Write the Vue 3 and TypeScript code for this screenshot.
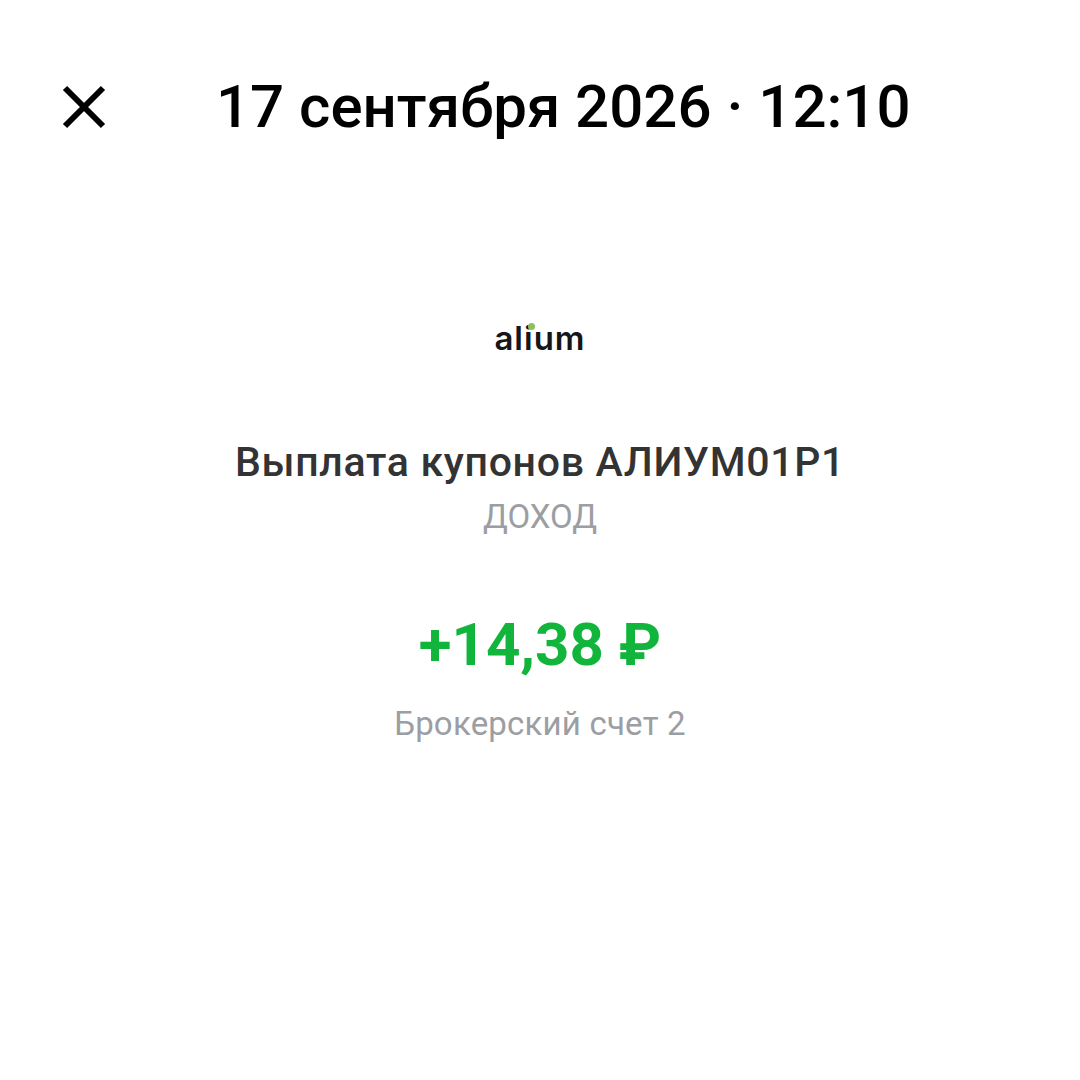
<script setup lang="ts">
const title = '17 сентября 2026 · 12:10'
</script>

<template>
  <div class="screen">
    <header class="head">
      <button class="close" aria-label="Закрыть">
        <svg width="44" height="44" viewBox="0 0 44 44" fill="none">
          <path d="M3 3 L41 41 M41 3 L3 41" stroke="#000" stroke-width="6" />
        </svg>
      </button>
      <h1 class="title">{{ title }}</h1>
    </header>

    <main class="body">
      <div class="logo">
        <span class="logo-text">alium</span>
        <span class="logo-dot"></span>
      </div>
      <div class="name">Выплата купонов АЛИУМ01Р1</div>
      <div class="kind">ДОХОД</div>
      <div class="amount">+14,38 ₽</div>
      <div class="account">Брокерский счет 2</div>
    </main>
  </div>
</template>

<style>
html, body {
  background: #fff;
}
</style>

<style scoped>
.screen {
  width: 1080px;
  height: 1080px;
  background: #fff;
  font-family: Roboto, "Liberation Sans", sans-serif;
  overflow: hidden;
}
.head {
  display: flex;
  align-items: center;
  padding: 71px 0 0 62px;
  height: 71px;
}
.close {
  width: 44px;
  height: 44px;
  padding: 0;
  border: 0;
  background: none;
  display: block;
}
.close svg {
  display: block;
}
.title {
  margin: 0 0 0 110px;
  font-size: 60px;
  font-weight: 500;
  line-height: 71px;
  color: #000;
  white-space: nowrap;
}
.body {
  display: flex;
  flex-direction: column;
  align-items: center;
  padding-top: 176px;
}
.logo {
  position: relative;
  height: 40px;
}
.logo-text {
  font-family: Inter, sans-serif;
  font-size: 33px;
  font-weight: 600;
  line-height: 40px;
  letter-spacing: 1px;
  color: #16161a;
}
.logo-dot {
  position: absolute;
  left: 34px;
  top: 5px;
  width: 7px;
  height: 7px;
  border-radius: 50%;
  background: #8fbf5a;
}
.name {
  margin-top: 80px;
  font-size: 41px;
  font-weight: 500;
  line-height: 48px;
  letter-spacing: 0.7px;
  color: #333;
}
.kind {
  margin-top: 10px;
  font-size: 33px;
  line-height: 42px;
  color: #9b9ea3;
}
.amount {
  margin-top: 72px;
  font-size: 60px;
  font-weight: 700;
  line-height: 70px;
  color: #12b53c;
}
.account {
  margin-top: 25px;
  font-size: 33px;
  line-height: 38px;
  letter-spacing: 0.2px;
  color: #9b9ea3;
}
</style>
